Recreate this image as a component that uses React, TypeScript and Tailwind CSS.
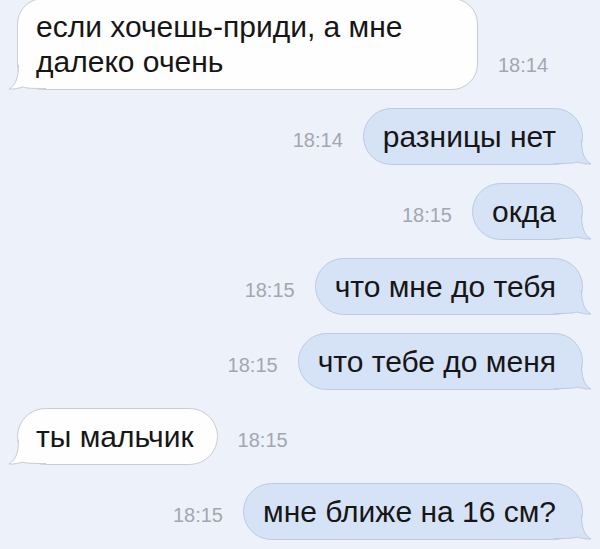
const messages = [
  { out: false, lines: ['если хочешь-приди, а мне', 'далеко очень'], time: '18:14' },
  { out: true, lines: ['разницы нет'], time: '18:14' },
  { out: true, lines: ['окда'], time: '18:15' },
  { out: true, lines: ['что мне до тебя'], time: '18:15' },
  { out: true, lines: ['что тебе до меня'], time: '18:15' },
  { out: false, lines: ['ты мальчик'], time: '18:15' },
  { out: true, lines: ['мне ближе на 16 см?'], time: '18:15' },
];

function Tail({ out }: { out: boolean }) {
  const fill = out ? '#d6e3f6' : '#fefefe';
  const stroke = out ? '#bccbe2' : '#c9ccd3';
  return (
    <svg
      width="38"
      height="26"
      viewBox="0 0 38 26"
      className={
        out
          ? 'absolute right-[-10px] bottom-[-2px]'
          : 'absolute left-[-10px] bottom-[-2px] -scale-x-100'
      }
    >
      <path
        d="M27.5 0 C27.5 12 30 20 37 24 C32 24.5 27 23 23 22 C19 23.5 12 23.5 0 23.5 L0 0 Z"
        fill={fill}
      />
      <path
        d="M27.5 0 C27.5 12 30 20 37 24 C32 24.5 27 23 23 22 C19 23.5 12 23.5 0 23.5"
        fill="none"
        stroke={stroke}
        strokeWidth="1"
      />
    </svg>
  );
}

function Bubble({ out, lines }: { out: boolean; lines: string[] }) {
  const multi = lines.length > 1;
  return (
    <div
      className={
        'relative border pt-[10px] pb-[10px] text-[30px] leading-[35px] text-[#161616] ' +
        (out
          ? 'bg-[#d6e3f6] border-[#bccbe2] rounded-[29px] pl-[19px] pr-[26px]'
          : 'bg-[#fefefe] border-[#c9ccd3] pl-[18px] pr-[23px] ' +
            (multi ? 'w-[461px] rounded-[26px]' : 'rounded-[29px]'))
      }
    >
      <Tail out={out} />
      <span className="relative whitespace-nowrap">
        {lines.map((l, i) => (
          <span key={i} className="block">
            {l}
          </span>
        ))}
      </span>
    </div>
  );
}

export default function App() {
  return (
    <div
      className="w-[600px] h-[549px] overflow-hidden bg-[#edf1f9] flex flex-col gap-[18px] pl-[17px] pr-[17px] pt-0"
      style={{ fontFamily: '"Liberation Sans", Arial, sans-serif' }}
    >
      {messages.map((m, i) => (
        <div
          key={i}
          className={
            'flex items-end gap-[20px] ' +
            (m.out ? 'flex-row-reverse' : 'flex-row') +
            (i === 0 ? ' -mt-[2px]' : '')
          }
        >
          <Bubble out={m.out} lines={m.lines} />
          <span className="text-[20px] leading-[24px] pb-[13px] text-[#a2a7b1]">{m.time}</span>
        </div>
      ))}
    </div>
  );
}
